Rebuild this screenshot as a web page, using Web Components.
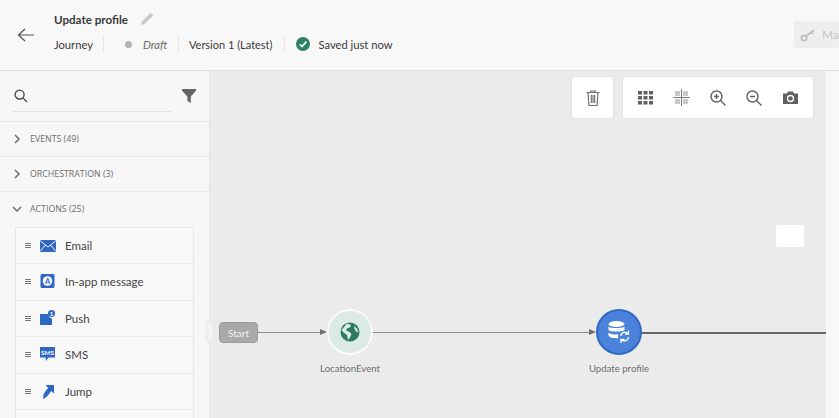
<!DOCTYPE html>
<html lang="en">
<head>
<meta charset="utf-8">
<title>Update profile</title>
<style>
    html, body { margin: 0; height: 100%; overflow: hidden; }
    body { font-family: Lato, "Liberation Sans", sans-serif; background: #ebebeb; }
</style>
</head>
<body>
<journey-app>
    <journey-header slot="header"></journey-header>
    <journey-sidebar slot="sidebar">
        <palette-section label="EVENTS (49)"></palette-section>
        <palette-section label="ORCHESTRATION (3)"></palette-section>
        <palette-section label="ACTIONS (25)" open>
            <palette-item label="Email" icon="email"></palette-item>
            <palette-item label="In-app message" icon="inapp"></palette-item>
            <palette-item label="Push" icon="push"></palette-item>
            <palette-item label="SMS" icon="sms"></palette-item>
            <palette-item label="Jump" icon="jump"></palette-item>
            <palette-item label="" icon=""></palette-item>
        </palette-section>
    </journey-sidebar>
    <journey-canvas slot="canvas"></journey-canvas>
</journey-app>

<script>
(function () {
    'use strict';

    class JourneyApp extends HTMLElement {
        constructor() {
            super();
            this.attachShadow({ mode: 'open' });
            this.shadowRoot.innerHTML = `
                <style>
                    :host { display: grid; grid-template-rows: 71px 347px; grid-template-columns: 210px 1fr; width: 839px; height: 418px; overflow: hidden; }
                    ::slotted([slot="header"]) { grid-column: 1 / 3; }
                </style>
                <slot name="header"></slot>
                <slot name="sidebar"></slot>
                <slot name="canvas"></slot>
            `;
        }
    }

    class JourneyHeader extends HTMLElement {
        constructor() {
            super();
            this.attachShadow({ mode: 'open' });
            this.shadowRoot.innerHTML = `
                <style>
                    :host { display: flex; align-items: center; box-sizing: border-box; height: 71px; background: #f8f8f8; border-bottom: 1px solid #dfdfdf; color: #3a3a3a; font-size: 11.2px; position: relative; }
                    .back { width: 54px; display: flex; justify-content: center; padding: 0 3px 0 0; box-sizing: border-box; margin-top: -1px; }
                    .info { display: flex; flex-direction: column; gap: 7px; margin-top: -7px; }
                    .title { display: flex; align-items: center; gap: 12px; font-weight: 700; height: 18px; font-size: 11.6px; }
                    .meta { display: flex; align-items: center; height: 18px; }
                    .cell { display: flex; align-items: center; height: 16px; }
                    .rule { width: 1px; height: 16px; background: #e6e6e6; }
                    .dot { width: 7px; height: 7px; border-radius: 50%; background: #b3b3b3; margin: 0 11px 0 21px; }
                    .draft { font-style: italic; color: #6a6a6a; margin-right: 11px; width: 24px; }
                    .version { margin: 0 11px 0 10px; font-size: 11px; }
                    .saved { margin-left: 11px; gap: 9px; font-size: 11.2px; }
                    .manage { position: absolute; left: 794px; top: 21px; width: 45px; height: 27px; background: #eeeeee; border-radius: 2px; display: flex; align-items: center; gap: 6px; padding-left: 6px; box-sizing: border-box; color: #c4c4c4; white-space: nowrap; font-size: 12px; }
                    .manage svg { flex: none; }
                </style>
                <div class="back">
                    <svg width="18" height="14" viewBox="0 0 18 14" fill="none" stroke="#555" stroke-width="1.2"><path d="M17 7H1.5M8 1 1.5 7 8 13"/></svg>
                </div>
                <div class="info">
                    <div class="title">
                        <span>Update profile</span>
                        <svg width="14" height="14" viewBox="0 0 14 14" fill="#c8c8c8"><path d="M10.5.8 13.2 3.5 4.6 12 1 13l1-3.6z"/></svg>
                    </div>
                    <div class="meta">
                        <span class="cell">Journey</span>
                        <span class="cell rule" style="margin-left:10px"></span>
                        <span class="dot"></span>
                        <span class="cell draft">Draft</span>
                        <span class="cell rule"></span>
                        <span class="cell version">Version 1 (Latest)</span>
                        <span class="cell rule"></span>
                        <span class="cell saved">
                            <svg width="14" height="14" viewBox="0 0 14 14"><circle cx="7" cy="7" r="7" fill="#2d8163"/><path d="M3.8 7.2 6 9.6l4.4-5" fill="none" stroke="#fff" stroke-width="1.7"/></svg>
                            <span>Saved just now</span>
                        </span>
                    </div>
                </div>
                <div class="manage">
                    <svg width="16" height="14" viewBox="0 0 16 14" fill="none" stroke="#c2c2c2" stroke-width="2"><circle cx="4" cy="10" r="2.6"/><path d="M6 8 14 2M11 4l2 2"/></svg>
                    <span>Ma</span>
                </div>
            `;
        }
    }

    class JourneySidebar extends HTMLElement {
        constructor() {
            super();
            this.attachShadow({ mode: 'open' });
            this.shadowRoot.innerHTML = `
                <style>
                    :host { display: block; background: #f7f7f7; border-right: 1px solid #e4e4e4; box-sizing: border-box; height: 347px; overflow: hidden; }
                    .search { display: flex; align-items: center; justify-content: space-between; box-sizing: border-box; height: 51px; padding: 0 13px 0 12px; border-bottom: 1px solid #e6e6e6; }
                    .field { display: flex; align-items: center; box-sizing: border-box; width: 160px; height: 28px; margin-top: 4px; padding: 0 0 4px 2px; border-bottom: 1px solid #e3e3e3; }
                </style>
                <div class="search">
                    <div class="field">
                        <svg width="14" height="14" viewBox="0 0 14 14" fill="none" stroke="#444" stroke-width="1.3"><circle cx="5.6" cy="5.6" r="4.5"/><path d="M8.9 8.9 13 13"/></svg>
                    </div>
                    <svg width="14" height="14" viewBox="0 0 14 14" fill="#666"><path d="M0 0h14v1.8L8.8 7.4V14L5.4 12V7.4L0 1.8z"/></svg>
                </div>
                <slot></slot>
            `;
        }
    }

    class PaletteSection extends HTMLElement {
        constructor() {
            super();
            this.attachShadow({ mode: 'open' });
        }

        connectedCallback() {
            const open = this.hasAttribute('open');
            const chevron = open
                ? '<path d="M1 3 5 7 9 3"/>'
                : '<path d="M3 1 7 5 3 9"/>';
            this.shadowRoot.innerHTML = `
                <style>
                    :host { display: block; border-bottom: 1px solid #e8e8e8; }
                    .head { display: flex; align-items: center; box-sizing: border-box; height: 34px; padding: 0 0 1px 12px; gap: 8px; color: #6d6d6d; font-family: "Open Sans", sans-serif; font-size: 8.8px; }
                    svg { flex: none; }
                    .items { padding: 0 15px; margin-top: ${open ? 1 : 0}px; }
                </style>
                <div class="head">
                    <svg width="10" height="10" viewBox="0 0 10 10" fill="none" stroke="#6d6d6d" stroke-width="1.5">${chevron}</svg>
                    <span>${this.getAttribute('label')}</span>
                </div>
                <div class="items"><slot></slot></div>
            `;
        }
    }

    const ITEM_ICONS = {
        email: '<svg width="16" height="12" viewBox="0 0 16 12"><rect width="16" height="12" fill="#2f67c4"/><path d="M0 .5 8 7l8-6.500M0 11.500 5.500 5M16 11.500 10.500 5" fill="none" stroke="#fff" stroke-width=".9"/></svg>',
        inapp: '<svg width="16" height="15" viewBox="0 0 16 15"><rect x=".500" width="14" height="14" rx="1.500" fill="#2f67c4"/><circle cx="7.500" cy="7" r="4.800" fill="#fff"/><text x="7.500" y="9.700" text-anchor="middle" font-size="7.500" font-weight="700" fill="#2f67c4">A</text></svg>',
        push: '<svg width="16" height="16" viewBox="0 0 16 16"><path d="M0 4h8.500a4.500 4.500 0 0 0 3.500 4.500V15H0z" fill="#2f67c4"/><circle cx="11.500" cy="3.500" r="3.500" fill="#2f67c4"/><text x="11.500" y="5.700" text-anchor="middle" font-size="6" font-weight="700" fill="#fff">1</text></svg>',
        sms: '<svg width="16" height="15" viewBox="0 0 16 15"><path d="M0 0h15v10.500H8.500L6 14l-.5-3.500H0z" fill="#2f67c4"/><text x="7.500" y="7.800" text-anchor="middle" font-size="6.300" font-weight="700" fill="#fff">SMS</text></svg>',
        jump: '<svg width="12" height="15" viewBox="0 0 12 15"><path d="M3.500 1H12v8.500L9.300 7 5.500 12 1.500 15C.4 11.500 2 8.500 6.200 4z" fill="#2f67c4"/></svg>'
    };

    class PaletteItem extends HTMLElement {
        constructor() {
            super();
            this.attachShadow({ mode: 'open' });
        }

        connectedCallback() {
            const icon = ITEM_ICONS[this.getAttribute('icon')] || '';
            const label = this.getAttribute('label');
            this.shadowRoot.innerHTML = `
                <style>
                    :host { display: block; }
                    .row { display: flex; align-items: center; box-sizing: border-box; height: 36.600px; background: #f8f8f8; border: 1px solid #e8e8e8; border-top-width: 0; padding-left: 9px; color: #444; font-size: 11.500px; }
                    :host(:first-child) .row { border-top-width: 1px; height: 37px; }
                    .grip { width: 6px; height: 5px; border-top: 1px solid #777; border-bottom: 1px solid #777; box-sizing: border-box; position: relative; margin-right: 9px; }
                    .grip::after { content: ''; position: absolute; left: 0; right: 0; top: 1px; height: 1px; background: #777; }
                    .icon { width: 16px; display: flex; justify-content: center; margin-right: 9px; }
                </style>
                <div class="row">
                    <span class="grip"></span>
                    <span class="icon">${icon}</span>
                    <span>${label}</span>
                </div>
            `;
        }
    }

    class JourneyCanvas extends HTMLElement {
        constructor() {
            super();
            this.attachShadow({ mode: 'open' });
            this.shadowRoot.innerHTML = `
                <style>
                    :host { display: block; position: relative; height: 347px; background: #ebebeb; font-size: 9.600px; color: #6e6e6e; }
                    .side { position: absolute; left: 616px; top: 0; bottom: 0; width: 13px; background: #f8f8f8; }
                    .card { position: absolute; top: 5px; height: 43px; box-sizing: border-box; background: #fff; border: 1px solid #e2e2e2; border-radius: 3px; display: flex; align-items: center; }
                    .trash { left: 361px; width: 43px; justify-content: center; }
                    .tools { left: 412px; width: 192px; padding-left: 15px; gap: 19.500px; }
                    .tools .camera { margin-left: 2px; }
                    .note { position: absolute; left: 566px; top: 154px; width: 28px; height: 22px; background: #fff; border-radius: 2px; }
                    .grabber { position: absolute; left: -4px; top: 250px; width: 8px; height: 21px; background: #f2f2f2; border: 1px solid #e6e6e6; border-radius: 3px; box-sizing: border-box; }
                    .line { position: absolute; height: 1px; background: #8a8a8a; }
                    .arrow { position: absolute; width: 0; height: 0; border-left: 7px solid #6e6e6e; border-top: 3.500px solid transparent; border-bottom: 3.500px solid transparent; }
                    .start { position: absolute; left: 9px; top: 251px; width: 39px; height: 21px; box-sizing: border-box; background: #a9a9a9; border: 1px solid #9b9b9b; border-radius: 4px; color: #f4f4f4; display: flex; align-items: center; justify-content: center; font-size: 10px; }
                    .node { position: absolute; top: 238px; width: 46px; height: 46px; border-radius: 50%; box-sizing: border-box; display: flex; align-items: center; justify-content: center; }
                    .node.location { left: 117px; background: #dbeae4; border: 2px solid #fafafa; }
                    .node.update { left: 386px; background: #4b82dc; border: 2px solid #2f67c4; }
                    .label { position: absolute; top: 292px; width: 100px; text-align: center; }
                </style>
                <div class="side"></div>
                <div class="card trash">
                    <svg width="14" height="16" viewBox="0 0 14 16" fill="none" stroke="#6a6a6a" stroke-width="1.100"><path d="M.5 2.500h13M4.800 2.500V1h4.400v1.500M2 2.500l1 13h8l1-13M5.300 5v8M7 5v8M8.700 5v8"/></svg>
                </div>
                <div class="card tools">
                    <svg width="15" height="14" viewBox="0 0 15 14" fill="#616161"><rect width="4" height="3.500"/><rect x="5.500" width="4" height="3.500"/><rect x="11" width="4" height="3.500"/><rect y="5" width="4" height="3.500"/><rect x="5.500" y="5" width="4" height="3.500"/><rect x="11" y="5" width="4" height="3.500"/><rect y="10" width="4" height="3.500"/><rect x="5.500" y="10" width="4" height="3.500"/><rect x="11" y="10" width="4" height="3.500"/></svg>
                    <svg width="18" height="18" viewBox="0 0 18 18"><g fill="#c9c9c9"><rect x="2" y="2" width="5" height="5"/><rect x="10" y="2" width="5" height="5"/><rect x="2" y="10" width="5" height="5"/><rect x="10" y="10" width="5" height="5"/></g><path d="M8.500 0v17M0 8.500h17" stroke="#7d7d7d" stroke-width="1"/></svg>
                    <svg width="16" height="16" viewBox="0 0 16 16" fill="none" stroke="#5f5f5f" stroke-width="1.400"><circle cx="6.500" cy="6.500" r="5.500"/><path d="M10.500 10.500 15.500 15.500M6.500 4v5M4 6.500h5"/></svg>
                    <svg width="16" height="16" viewBox="0 0 16 16" fill="none" stroke="#5f5f5f" stroke-width="1.400"><circle cx="6.500" cy="6.500" r="5.500"/><path d="M10.500 10.500 15.500 15.500M4 6.500h5"/></svg>
                    <svg class="camera" width="15" height="13" viewBox="0 0 15 13"><path d="M0 2.500h4L5 .5h5l1 2h4V13H0z" fill="#616161"/><circle cx="7.500" cy="7.500" r="3" fill="none" stroke="#fff" stroke-width="1.300"/></svg>
                </div>
                <div class="note"></div>
                <div class="grabber"></div>

                <div class="line" style="left:48px;top:261px;width:64px"></div>
                <div class="arrow" style="left:110px;top:258px"></div>
                <div class="line" style="left:162px;top:261px;width:218px"></div>
                <div class="arrow" style="left:379px;top:258px"></div>
                <div class="line" style="left:432px;top:261px;width:184px;height:2px;background:#666"></div>

                <div class="start">Start</div>
                <div class="node location">
                    <svg width="20" height="20" viewBox="0 0 20 20"><circle cx="10" cy="10" r="9.500" fill="#2d7a5f"/><path d="M7 1.500 11 3l-1 2.500L7.500 6 6 8.500 9 9.500 11.500 12 10 15.500 8 18 7 13 3.500 10.500 1.500 8zM14 4l3 2.500 1.500 4-2.500-1-1.500-2.500z" fill="#dbeae4"/></svg>
                </div>
                <div class="label" style="left:90px">LocationEvent</div>
                <div class="node update">
                    <svg width="24" height="24" viewBox="0 0 24 24"><g fill="#fff"><ellipse cx="9.500" cy="4" rx="8" ry="3"/><path d="M1.500 6.500c1.500 2 14.500 2 16 0V10c-1.500 2-14.500 2-16 0z"/><path d="M1.500 12.500c1.500 2 8 2.400 10 1.800-.6 1.200-.7 2.700-.4 3.900-4 .3-8.100-.5-9.600-2.200z"/></g><path d="M14 16a4 4 0 0 1 7-2.500M21.500 17a4 4 0 0 1-7 2.500M21.500 10.500v3.500H18M14 23v-3.500h3.500" fill="none" stroke="#fff" stroke-width="1.300"/></svg>
                </div>
                <div class="label" style="left:359px">Update profile</div>
            `;
        }
    }

    customElements.define('journey-app', JourneyApp);
    customElements.define('journey-header', JourneyHeader);
    customElements.define('journey-sidebar', JourneySidebar);
    customElements.define('palette-section', PaletteSection);
    customElements.define('palette-item', PaletteItem);
    customElements.define('journey-canvas', JourneyCanvas);
})();
</script>
</body>
</html>
